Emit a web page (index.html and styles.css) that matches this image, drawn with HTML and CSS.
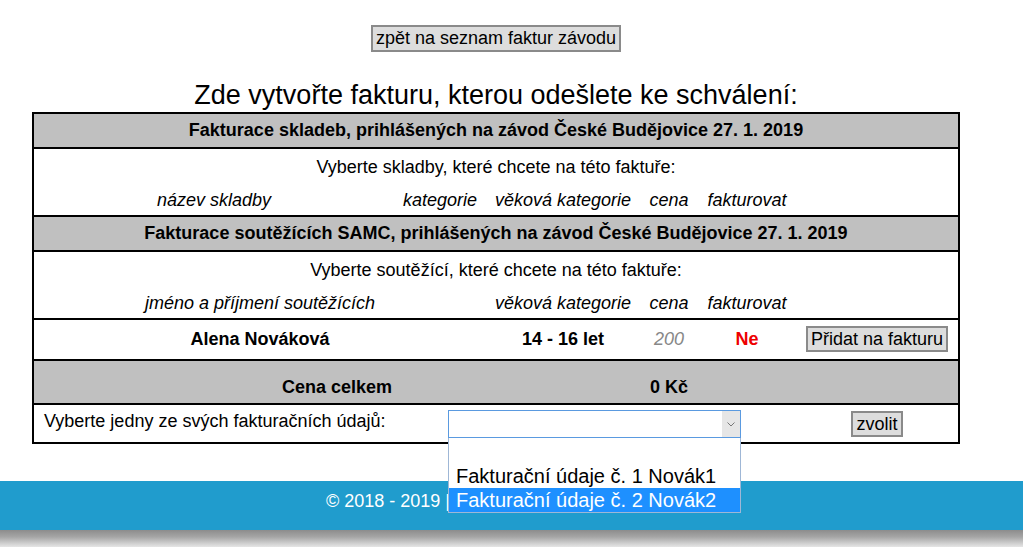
FILE: index.html
```html
<!DOCTYPE html>
<html lang="cs">

<head>
    <meta charset="UTF-8">
    <meta name="viewport" content="width=device-width, initial-scale=1.0">
    <title>Fakturace</title>
    <link rel="stylesheet" href="styles.css">
</head>

<body>
    <div class="page">
        <div class="top">
            <button class="btn">zpět na seznam faktur závodu</button>
        </div>
        <h2 class="title">Zde vytvořte fakturu, kterou odešlete ke schválení:</h2>

        <div class="invoice">
            <div class="band">Fakturace skladeb, prihlášených na závod České Budějovice 27. 1. 2019</div>
            <div class="section">
                <p class="hint">Vyberte skladby, které chcete na této faktuře:</p>
                <div class="cols songs">
                    <i>název skladby</i>
                    <i>kategorie</i>
                    <i>věková kategorie</i>
                    <i>cena</i>
                    <i>fakturovat</i>
                    <span></span>
                </div>
            </div>

            <div class="band">Fakturace soutěžících SAMC, prihlášených na závod České Budějovice 27. 1. 2019</div>
            <div class="section">
                <p class="hint">Vyberte soutěžící, které chcete na této faktuře:</p>
                <div class="cols people">
                    <i>jméno a příjmení soutěžících</i>
                    <i>věková kategorie</i>
                    <i>cena</i>
                    <i>fakturovat</i>
                    <span></span>
                </div>
            </div>

            <div class="cols people person">
                <b>Alena Nováková</b>
                <b>14 - 16 let</b>
                <i class="price">200</i>
                <b class="no">Ne</b>
                <span><button class="btn small">Přidat na fakturu</button></span>
            </div>

            <div class="cols people total">
                <b class="wide">Cena celkem</b>
                <b>0 Kč</b>
                <span></span>
                <span></span>
            </div>

            <div class="cols choose">
                <span class="label">Vyberte jedny ze svých fakturačních údajů:</span>
                <div class="picker">
                    <div class="select">
                        <span class="value"></span>
                        <span class="arrow">
                            <svg width="8" height="5" viewBox="0 0 8 5">
                                <path d="M0.5 0.5 L4 4 L7.5 0.5" fill="none" stroke="#777" stroke-width="1"/>
                            </svg>
                        </span>
                    </div>
                    <ul class="options">
                        <li class="empty"></li>
                        <li>Fakturační údaje č. 1 Novák1</li>
                        <li class="active">Fakturační údaje č. 2 Novák2</li>
                    </ul>
                </div>
                <span></span>
                <span class="go"><button class="btn small">zvolit</button></span>
            </div>
        </div>
    </div>

    <footer class="foot">© 2018 - 2019 | tvorba a správa webu: SAMC</footer>
    <div class="shade"></div>
</body>

</html>
```

FILE: styles.css
```css
body {
    margin: 0;
    padding: 0;
    background-color: #fff;
    color: #000;
    font-family: 'Liberation Sans', Arial, sans-serif;
    font-size: 18px;
}

.page {
    width: 992px;
}

.top {
    padding-top: 25px;
    text-align: center;
}

.btn {
    font-family: 'Liberation Sans', Arial, sans-serif;
    font-size: 18px;
    height: 27px;
    padding: 0 3px;
    background-color: #dddddd;
    border: 2px solid #8a8a8a;
    color: #000;
}

.btn.small {
    height: 26px;
}

.title {
    margin: 28px 0 0;
    font-size: 27px;
    font-weight: normal;
    line-height: 31px;
    text-align: center;
}

.invoice {
    margin: 1px 32px 0;
    border: 2px solid #000;
}

.invoice > div {
    border-bottom: 2px solid #000;
}

.invoice > div:last-child {
    border-bottom: none;
}

.band {
    background-color: #c0c0c0;
    padding: 7px 0;
    line-height: 19px;
    font-weight: bold;
    text-align: center;
}

.hint {
    margin: 0;
    padding: 9px 0 5px;
    line-height: 19px;
    text-align: center;
}

.cols {
    display: grid;
    text-align: center;
}

.cols > * {
    padding: 9px 0 5px;
    line-height: 19px;
}

.songs {
    grid-template-columns: 360px 92px 154px 58px 98px 162px;
}

.people {
    grid-template-columns: 452px 154px 58px 98px 162px;
}

.person {
    align-items: center;
}

.person > * {
    padding: 6px 0 7px;
}

.price {
    color: #888;
}

.no {
    color: #ee0000;
}

.total {
    background-color: #c0c0c0;
}

.total > * {
    padding: 17px 0 6px;
    line-height: 19px;
}

.total .wide {
    grid-column: span 2;
}

.choose {
    grid-template-columns: 414px 293px 55px 162px;
    align-items: start;
}

.choose > * {
    padding: 0;
}

.label {
    text-align: left;
    padding: 6px 0 0 10px !important;
    line-height: 20px;
}

.picker {
    position: relative;
    margin: 5px 0 4px;
}

.select {
    display: flex;
    height: 26px;
    border: 1px solid #5a9ae0;
    background-color: #fff;
}

.value {
    flex: 1;
}

.arrow {
    width: 18px;
    background-color: #e6e6e6;
    display: flex;
    align-items: center;
    justify-content: center;
}

.options {
    position: absolute;
    top: 28px;
    left: 0;
    right: 0;
    margin: 0;
    padding: 0;
    list-style: none;
    background-color: #fff;
    border: 1px solid #9fb7d6;
    border-top: none;
    text-align: left;
    font-size: 20px;
    z-index: 5;
}

.options li {
    height: 24px;
    line-height: 24px;
    padding-left: 7px;
}

.options .empty {
    height: 26px;
}

.options .active {
    background-color: #1e90ff;
    color: #fff;
}

.go {
    text-align: center;
    padding-top: 6px !important;
}

.foot {
    margin-top: 37px;
    height: 49px;
    line-height: 41px;
    padding-right: 8px;
    background-color: #209ccd;
    color: #fff;
    text-align: center;
    font-size: 18px;
}

.shade {
    height: 17px;
    background: linear-gradient(#8c8c8c, #a5a5a5 40%, #e6e6e6);
}
```
